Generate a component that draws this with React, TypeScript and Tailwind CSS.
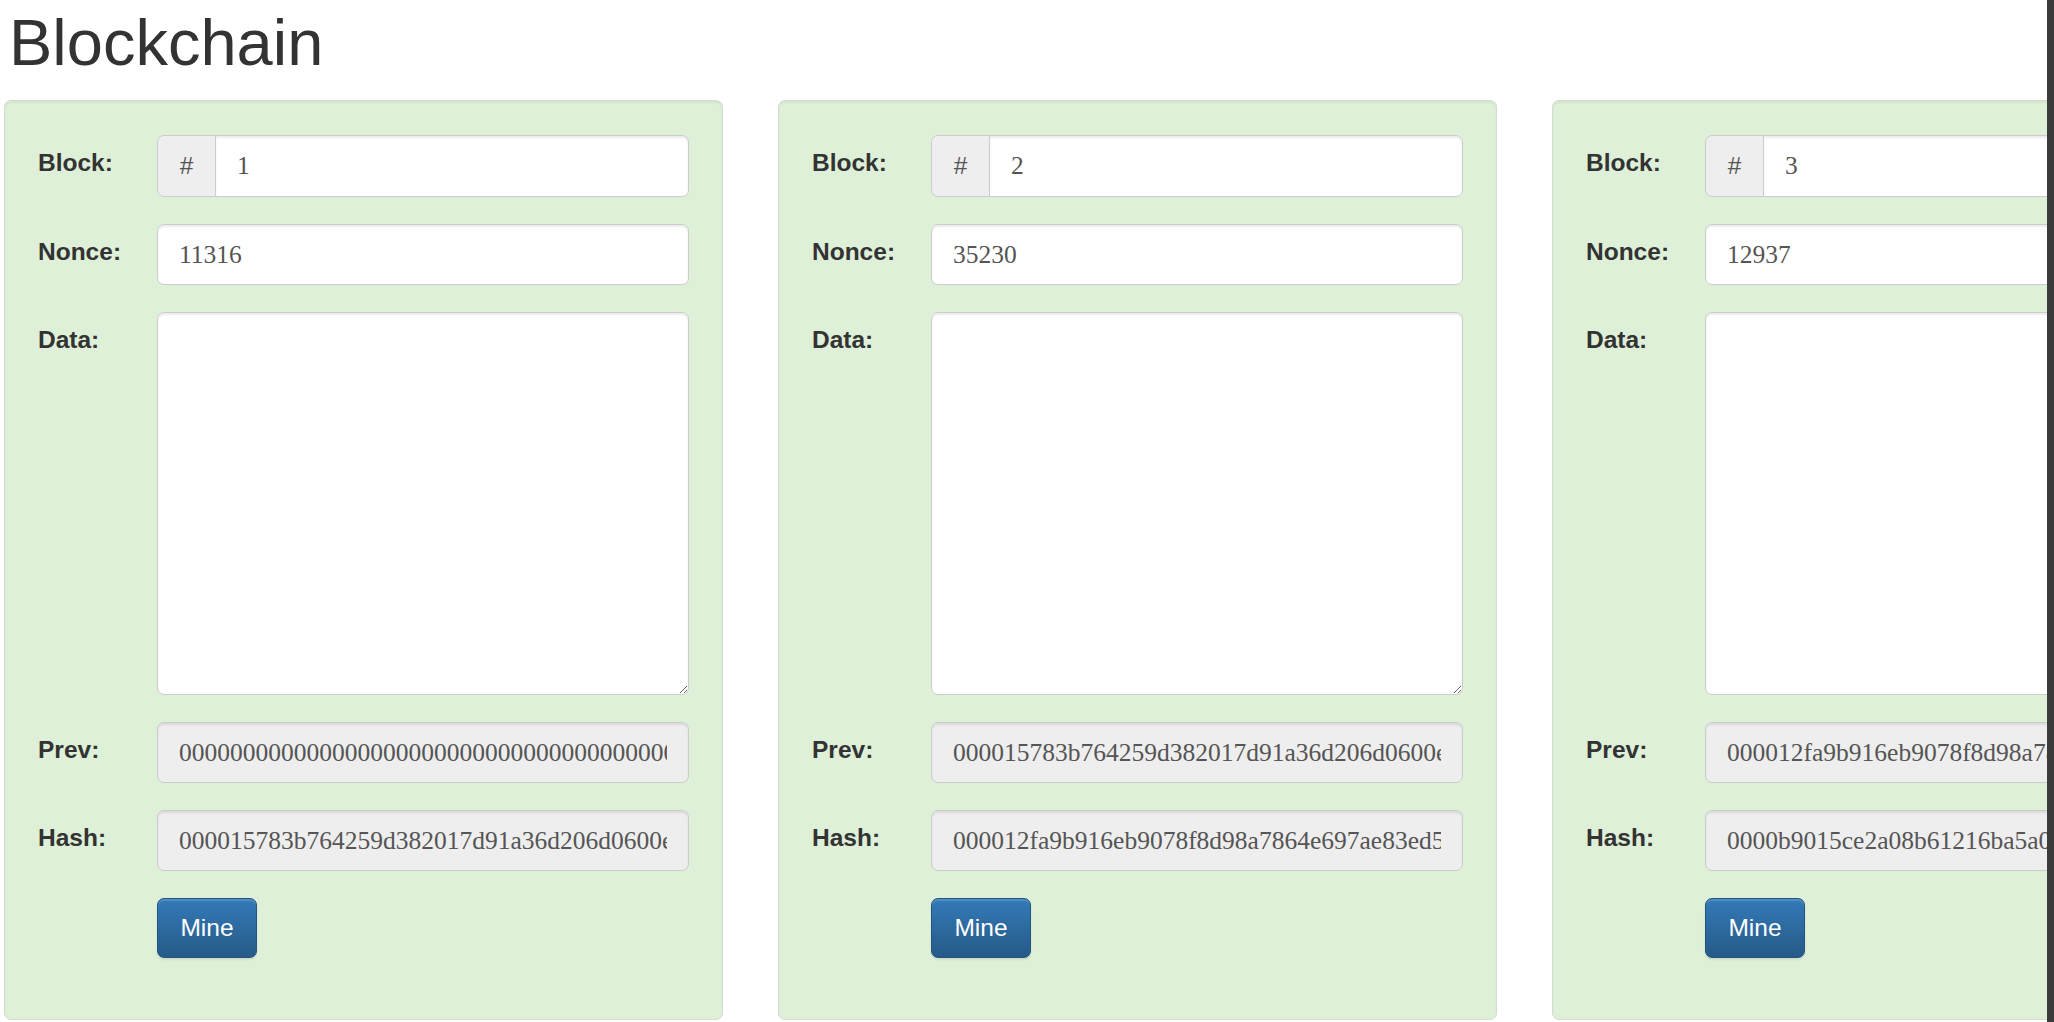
import React from 'react'

type Block = {
    id: number
    nonce: string
    prev: string
    hash: string
}

const ZERO = '0000000000000000000000000000000000000000000000000000000000000000'

const blocks: Block[] = [
    {
        id: 1,
        nonce: '11316',
        prev: ZERO,
        hash: '000015783b764259d382017d91a36d206d0600e4bd05a3f1c2c7b8e9d4a6f1c3',
    },
    {
        id: 2,
        nonce: '35230',
        prev: '000015783b764259d382017d91a36d206d0600e4bd05a3f1c2c7b8e9d4a6f1c3',
        hash: '000012fa9b916eb9078f8d98a7864e697ae83ed54f6a1c0b2e93d7f8a1c45b60',
    },
    {
        id: 3,
        nonce: '12937',
        prev: '000012fa9b916eb9078f8d98a7864e697ae83ed54f6a1c0b2e93d7f8a1c45b60',
        hash: '0000b9015ce2a08b61216ba5a0a7e3c8f21d94b6e0c5d7a38f1b2e6c9d40a7f5',
    },
]

const inputBase =
    "h-[61px] w-full border border-[#ccc] px-[21px] text-[25.5px] text-[#555] font-['Liberation_Serif',serif] outline-none shadow-[inset_0_2px_2px_rgba(0,0,0,0.075)]"

function Label({ children }: { children: React.ReactNode }) {
    return (
        <label className="w-[119px] shrink-0 pt-[10px] text-[24.5px] leading-[35px] font-bold text-[#333]">
            {children}
        </label>
    )
}

function BlockCard({ block }: { block: Block }) {
    return (
        <div className="w-[719px] shrink-0 rounded-[7px] border border-[#d3dccf] bg-[#dff0d8] pt-[34px] pb-[61px] pl-[33px] pr-[33px] shadow-[inset_0_2px_2px_rgba(0,0,0,0.05)]">
            <div className="flex flex-col gap-[27px]">
                <div className="flex items-start">
                    <Label>Block:</Label>
                    <div className="flex h-[62px] w-[532px]">
                        <span className="flex w-[59px] shrink-0 items-center justify-center rounded-l-[7px] border border-[#ccc] bg-[#eee] text-[24.5px] text-[#555] font-['Liberation_Sans',sans-serif]">
                            #
                        </span>
                        <input
                            defaultValue={block.id}
                            className={`${inputBase} h-[62px] -ml-px rounded-r-[7px] bg-white`}
                        />
                    </div>
                </div>

                <div className="flex items-start">
                    <Label>Nonce:</Label>
                    <input defaultValue={block.nonce} className={`${inputBase} rounded-[7px] bg-white`} />
                </div>

                <div className="flex items-start">
                    <Label>Data:</Label>
                    <textarea className="h-[383px] w-full resize-y rounded-[7px] border border-[#ccc] bg-white px-[21px] py-[10px] text-[25.5px] text-[#555] font-['Liberation_Serif',serif] outline-none shadow-[inset_0_2px_2px_rgba(0,0,0,0.075)]" />
                </div>

                <div className="flex items-start">
                    <Label>Prev:</Label>
                    <input readOnly value={block.prev} className={`${inputBase} rounded-[7px] bg-[#eee]`} />
                </div>

                <div className="flex items-start">
                    <Label>Hash:</Label>
                    <input readOnly value={block.hash} className={`${inputBase} rounded-[7px] bg-[#eee]`} />
                </div>

                <div className="flex items-start">
                    <div className="w-[119px] shrink-0" />
                    <button className="h-[60px] w-[100px] rounded-[7px] border border-[#245580] bg-[linear-gradient(to_bottom,#337ab7_0%,#265a88_100%)] text-[24.5px] text-white font-['Liberation_Sans',sans-serif] shadow-[inset_0_2px_0_rgba(255,255,255,0.15),0_2px_2px_rgba(0,0,0,0.075)]">
                        Mine
                    </button>
                </div>
            </div>
        </div>
    )
}

export default function App() {
    return (
        <div className="flex h-screen w-full overflow-hidden bg-white font-['Liberation_Sans',Arial,sans-serif]">
            <main className="min-w-0 flex-1 overflow-hidden pl-[4px]">
                <h1 className="ml-[5px] mt-[8px] mb-[22px] text-[65px] leading-[70px] font-normal text-[#333]">
                    Blockchain
                </h1>
                <section aria-label="Blocks" className="flex items-start gap-[55px]">
                    {blocks.map((block) => (
                        <BlockCard key={block.id} block={block} />
                    ))}
                </section>
            </main>
            <div className="w-[7px] shrink-0 bg-[#3b3b3b]" />
        </div>
    )
}
